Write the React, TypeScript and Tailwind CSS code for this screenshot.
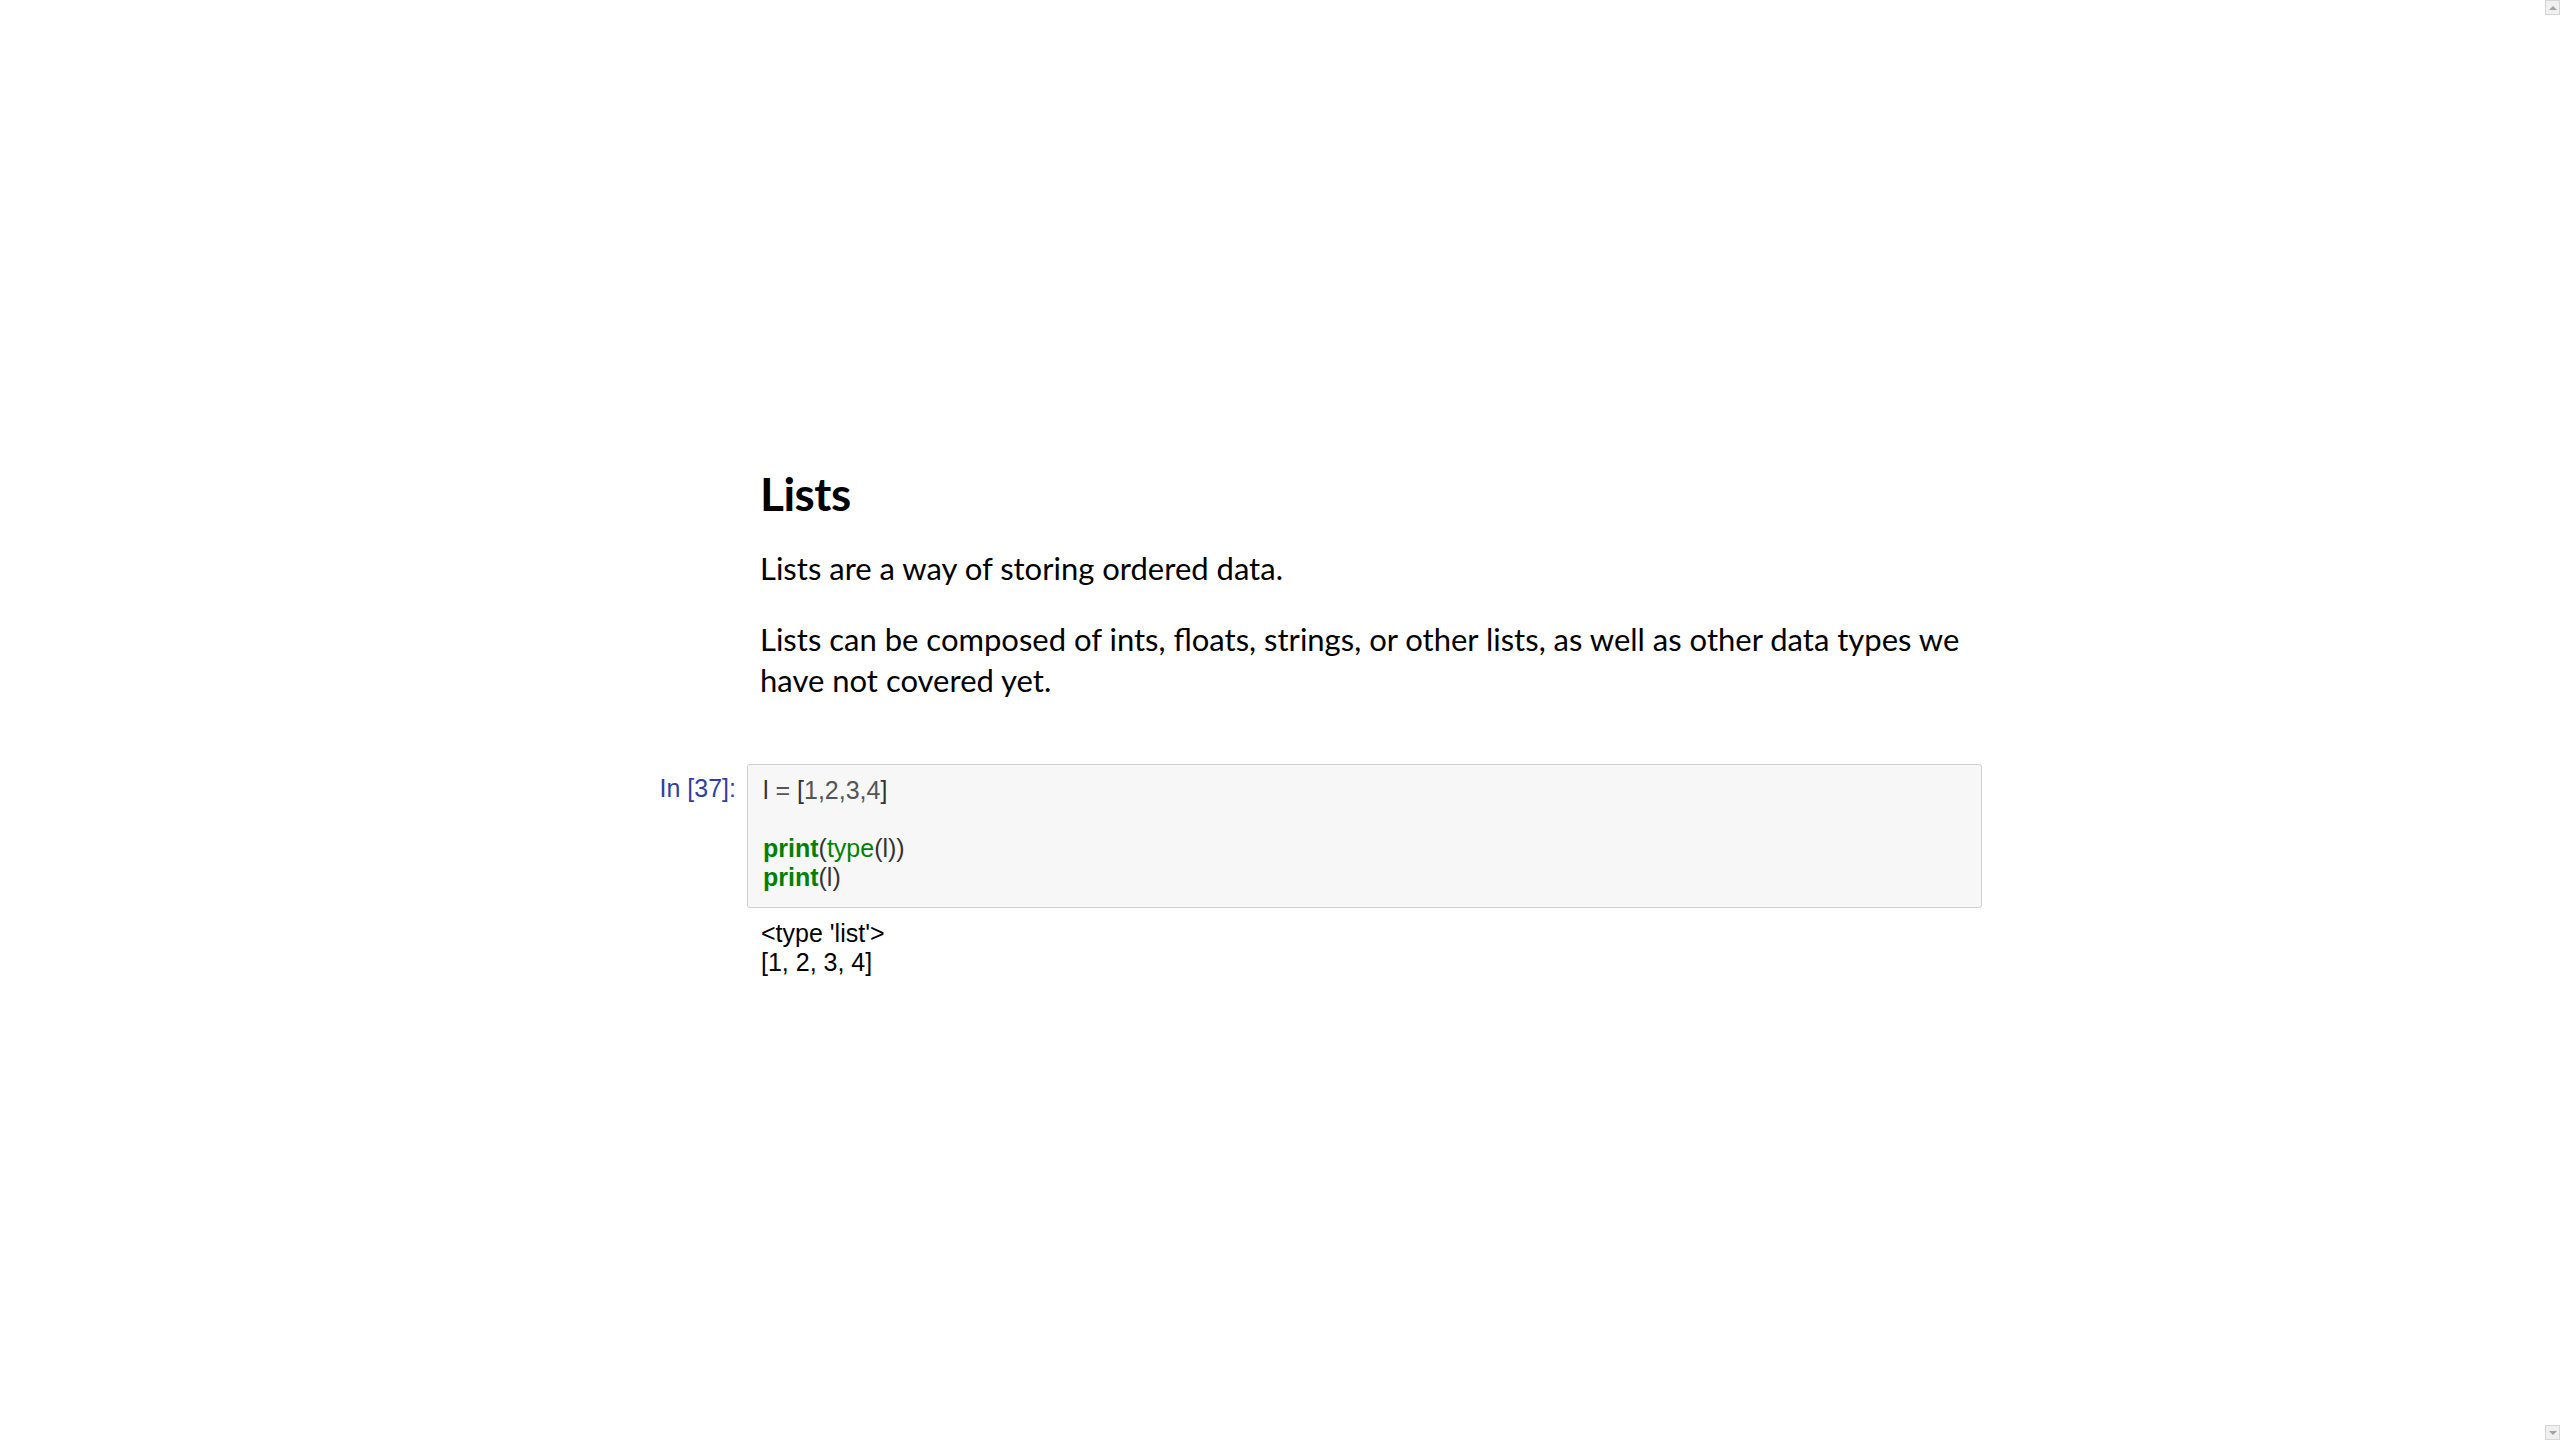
import React from "react";

const lato = { fontFamily: "Lato, 'Open Sans', sans-serif" };

function ScrollArrow({ up }: { up: boolean }) {
  return (
    <div
      className={`fixed right-0 w-[15px] h-[15px] bg-[#f0f0f0] border border-[#d6d6d6] flex items-center justify-center ${
        up ? "top-0" : "bottom-0"
      }`}
    >
      <div
        className={
          up
            ? "w-0 h-0 border-l-[4px] border-r-[4px] border-b-[4px] border-l-transparent border-r-transparent border-b-[#a3a3a3]"
            : "w-0 h-0 border-l-[4px] border-r-[4px] border-t-[4px] border-l-transparent border-r-transparent border-t-[#a3a3a3]"
        }
      />
    </div>
  );
}

export default function App() {
  return (
    <div className="min-h-screen w-full bg-white text-black">
      <div className="mx-auto w-[1404px] pt-[464px]">
        {/* Markdown cell */}
        <div className="flex">
          <div className="w-[169px] shrink-0" />
          <div className="flex-1 pl-[13px]" style={lato}>
            <h1 className="text-[46px] leading-[60px] font-bold tracking-[-0.5px]">Lists</h1>
            <p className="mt-[24px] text-[31px] leading-[41px]">
              Lists are a way of storing ordered data.
            </p>
            <p className="mt-[30px] text-[31px] leading-[41px]">
              <span className="whitespace-nowrap">
                Lists can be composed of ints, floats, strings, or other lists, as well as other data types we
              </span>
              <br />
              have not covered yet.
            </p>
          </div>
        </div>

        {/* Code cell */}
        <div
          className="mt-[63px] flex"
          style={{ fontFamily: "'Liberation Sans', Arial, sans-serif" }}
        >
          <div className="w-[169px] shrink-0 pr-[11px] pt-[10px] text-right text-[25px] leading-[29px] text-[#303f9f]">
            In&nbsp;[37]:
          </div>
          <div className="flex-1 flex flex-col">
            <div className="h-[144px] rounded-[3px] border border-[#cfcfcf] bg-[#f7f7f7] pl-[15px] pt-[11px] text-[25px] leading-[29px] text-[#333]">
              <div>
                <span className="text-[#333]">l</span>
                <span className="text-[#555]"> = </span>
                <span className="text-[#333]">[</span>
                <span className="text-[#555]">1,2,3,4</span>
                <span className="text-[#333]">]</span>
              </div>
              <div>&nbsp;</div>
              <div>
                <span className="font-bold text-[#008000]">print</span>
                <span>(</span>
                <span className="text-[#008000]">type</span>
                <span>(l))</span>
              </div>
              <div>
                <span className="font-bold text-[#008000]">print</span>
                <span>(l)</span>
              </div>
            </div>
            <div className="pt-[11px] pl-[14px] text-[25px] leading-[29px] text-black">
              <div>&lt;type 'list'&gt;</div>
              <div>[1, 2, 3, 4]</div>
            </div>
          </div>
        </div>
      </div>

      <ScrollArrow up />
      <ScrollArrow up={false} />
    </div>
  );
}
